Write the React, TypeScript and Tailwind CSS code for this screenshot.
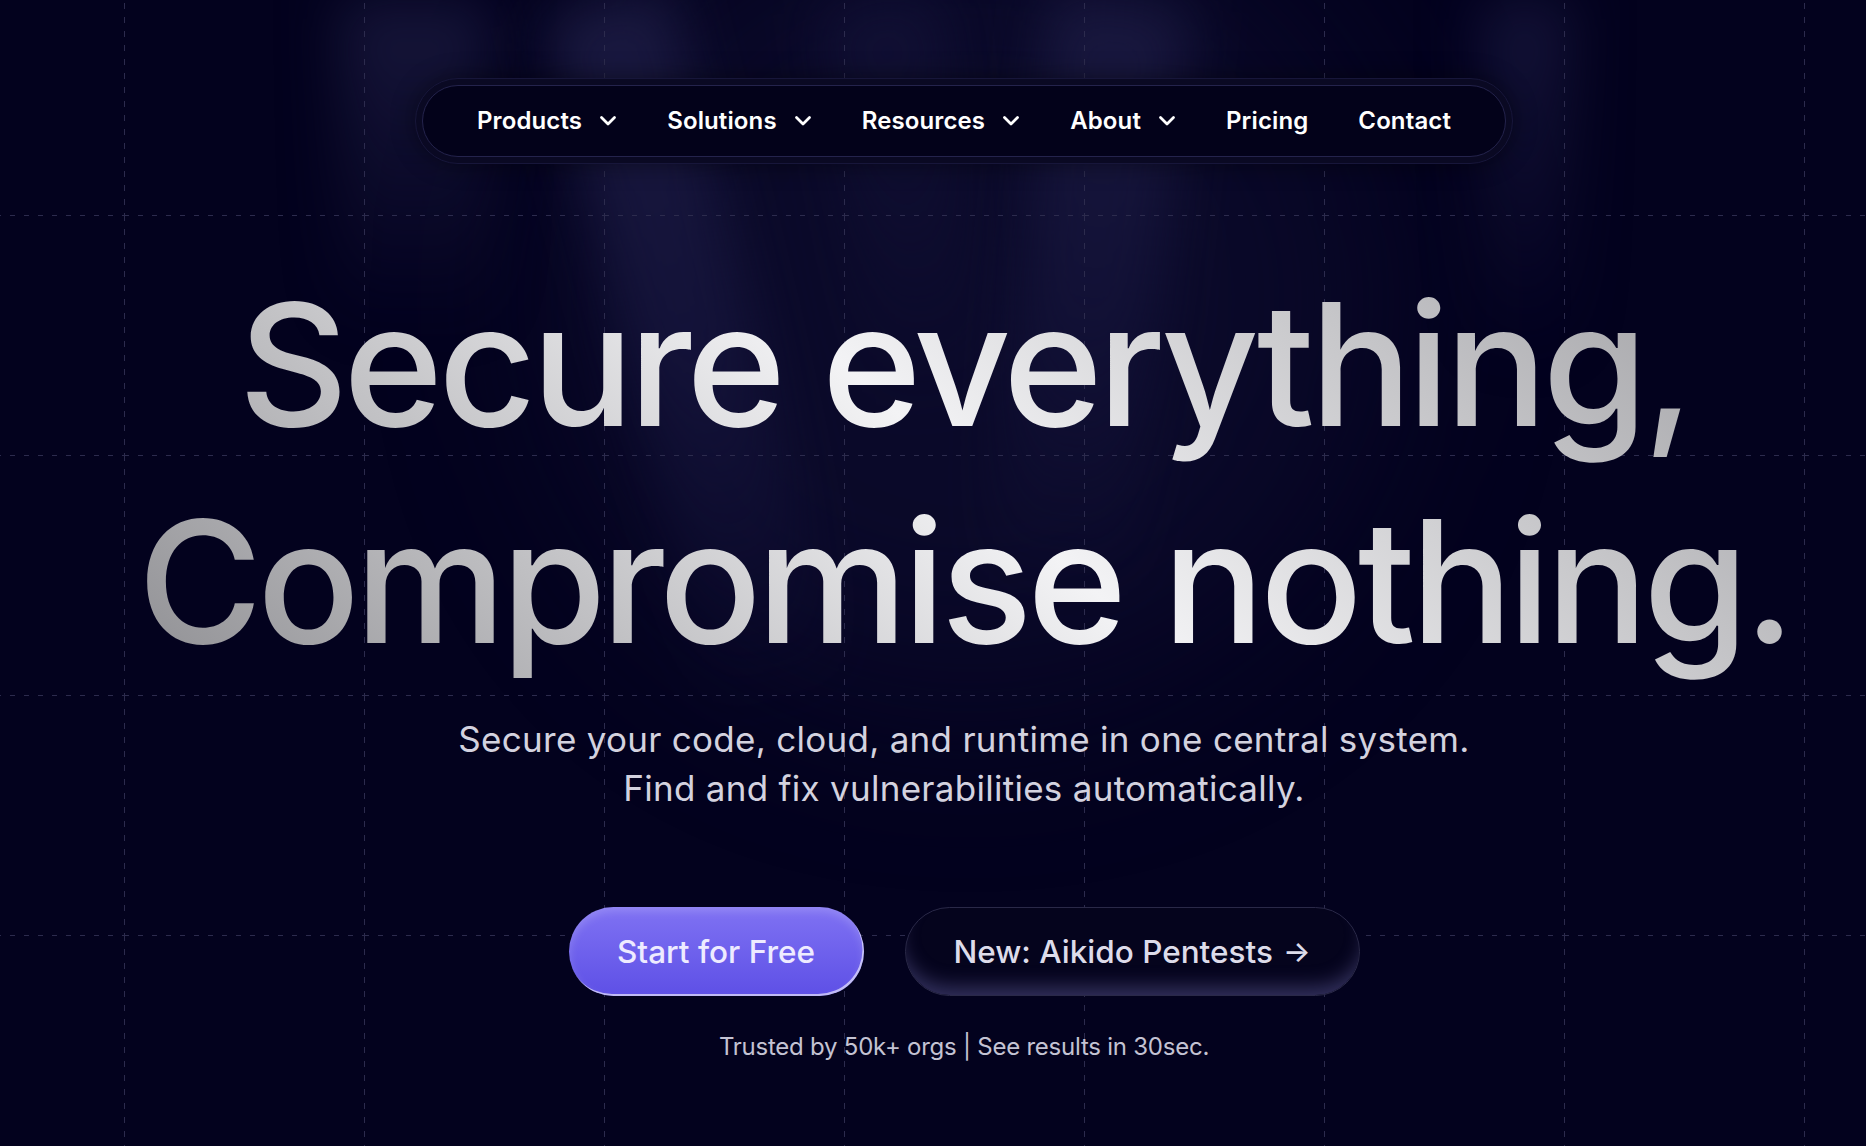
import { ReactNode } from "react"

const navItems: { label: string; menu: boolean }[] = [
  { label: "Products", menu: true },
  { label: "Solutions", menu: true },
  { label: "Resources", menu: true },
  { label: "About", menu: true },
  { label: "Pricing", menu: false },
  { label: "Contact", menu: false },
]

function Chevron() {
  return (
    <svg width="18" height="12" viewBox="0 0 18 12" fill="none" className="shrink-0">
      <polyline
        points="2.5,2.5 9,9 15.5,2.5"
        stroke="white"
        strokeWidth="2.8"
        strokeLinecap="round"
        strokeLinejoin="round"
      />
    </svg>
  )
}

// dashed 240px grid behind everything
function Grid() {
  return (
    <svg className="absolute inset-0 h-full w-full" aria-hidden>
      <defs>
        <pattern id="grid" x="124" y="-25" width="240" height="240" patternUnits="userSpaceOnUse">
          <line x1="0.5" y1="0" x2="0.5" y2="240" stroke="#2c2b4d" strokeWidth="1" strokeDasharray="6 8" />
          <line x1="0" y1="0.5" x2="240" y2="0.5" stroke="#2c2b4d" strokeWidth="1" strokeDasharray="5 9" />
        </pattern>
      </defs>
      <rect width="100%" height="100%" fill="url(#grid)" />
    </svg>
  )
}

function Ray({ className }: { className: string }) {
  return <div className={`absolute top-0 blur-[28px] ${className}`} />
}

function Glow({ children }: { children?: ReactNode }) {
  return (
    <div className="pointer-events-none absolute inset-0 overflow-hidden">
      <div className="absolute left-[560px] top-[-100px] h-[800px] w-[820px] rounded-full bg-[#0c0b2c] opacity-80 blur-[90px]" />
      <Ray className="left-[340px] h-[330px] w-[150px] bg-linear-to-b from-[#17163a] to-transparent" />
      <Ray className="left-[540px] h-[720px] w-[130px] origin-top -rotate-[14deg] bg-linear-to-b from-[#1a1940] via-[#131238] to-transparent" />
      <Ray className="left-[820px] h-[420px] w-[120px] origin-top -rotate-[8deg] bg-linear-to-b from-[#111034] to-transparent" />
      <Ray className="left-[1050px] h-[600px] w-[140px] origin-top rotate-[6deg] bg-linear-to-b from-[#19183f] via-[#121136] to-transparent" />
      <Ray className="left-[1480px] h-[360px] w-[90px] bg-linear-to-b from-[#141338] to-transparent" />
      {children}
    </div>
  )
}

export default function App() {
  return (
    <div
      className="relative min-h-[1146px] w-full overflow-hidden bg-[#03021e]"
      style={{ fontFamily: "Inter, 'Noto Sans', sans-serif" }}
    >
      <Glow />
      <Grid />

      <div className="relative flex flex-col items-center pl-[62px] pt-[78px]">
        {/* nav */}
        <nav className="rounded-full border border-[#17163a] bg-[#0a0923] p-[6px] shadow-[0_0_24px_rgba(0,0,0,0.45)]">
          <div className="flex h-[72px] items-center gap-[50px] rounded-full border border-[#24234c] bg-[#03021a] px-[54px]">
            {navItems.map((item) => (
              <div key={item.label} className="flex items-center gap-[17px]">
                <span className="text-[24px] font-semibold tracking-[0.005em] text-white">{item.label}</span>
                {item.menu && <Chevron />}
              </div>
            ))}
          </div>
        </nav>

        {/* headline */}
        <h1 className="mt-[92px] bg-[linear-gradient(42deg,#8e8e92_0%,#f3f3f5_50%,#9a9a9e_100%)] bg-clip-text text-center text-[170px] font-medium leading-[217px] tracking-[-0.029em] text-transparent">
          Secure everything,
          <br />
          Compromise nothing.
        </h1>

        <p className="mt-[25px] text-center text-[35px] leading-[49px] tracking-[0.008em] text-[#d3d2df]">
          Secure your code, cloud, and runtime in one central system.
          <br />
          Find and fix vulnerabilities automatically.
        </p>

        <div className="mt-[94px] flex items-center gap-[41px]">
          <button className="flex h-[89px] w-[295px] items-center justify-center rounded-full bg-linear-to-b from-[#8072f3] to-[#5e4fe6] text-[31.5px] font-medium text-[#eeebff] shadow-[inset_-1.5px_-2px_0_rgba(255,255,255,0.6),inset_0_4px_10px_rgba(255,255,255,0.18)]">
            Start for Free
          </button>
          <button className="flex h-[89px] w-[455px] items-center justify-center gap-[10px] rounded-full border border-[#2a2948] bg-[#05041d] text-[31.5px] font-medium text-[#dddcea] shadow-[inset_0_-16px_20px_-8px_rgba(125,120,195,0.4)]">
            New: Aikido Pentests
            <span className="text-[29px]">→</span>
          </button>
        </div>

        <p className="mt-[35px] text-[24px] leading-[32px] tracking-[-0.01em] text-[#c4c3d3]">
          Trusted by 50k+ orgs | See results in 30sec.
        </p>
      </div>
    </div>
  )
}
